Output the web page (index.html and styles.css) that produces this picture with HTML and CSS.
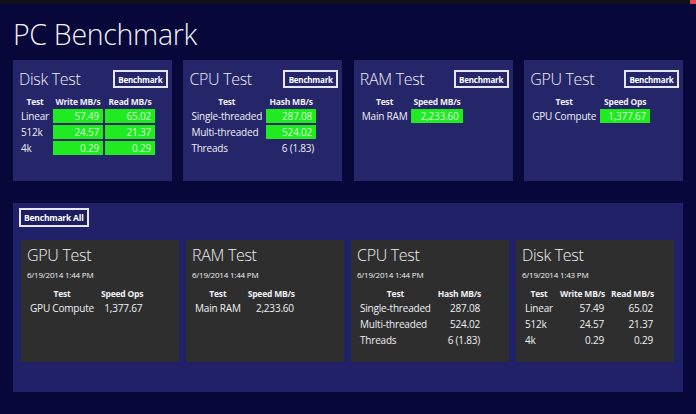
FILE: index.html
```html
<!DOCTYPE html>
<html lang="en">
<head>
    <meta charset="UTF-8">
    <meta name="viewport" content="width=device-width, initial-scale=1.0">
    <title>PC Benchmark</title>
    <link rel="stylesheet" href="styles.css">
</head>
<body>
    <div class="topbar"><span class="topbar-dot"></span></div>
    <h1 class="title">PC Benchmark</h1>

    <div class="tests">
        <section class="card">
            <div class="card-head">
                <h2>Disk Test</h2>
                <button class="btn">Benchmark</button>
            </div>
            <table class="results">
                <tr><th>Test</th><th>Write MB/s</th><th>Read MB/s</th></tr>
                <tr><td>Linear</td><td class="val">57.49</td><td class="val">65.02</td></tr>
                <tr><td>512k</td><td class="val">24.57</td><td class="val">21.37</td></tr>
                <tr><td>4k</td><td class="val">0.29</td><td class="val">0.29</td></tr>
            </table>
        </section>

        <section class="card">
            <div class="card-head">
                <h2>CPU Test</h2>
                <button class="btn">Benchmark</button>
            </div>
            <table class="results">
                <tr><th>Test</th><th>Hash MB/s</th></tr>
                <tr><td>Single-threaded</td><td class="val">287.08</td></tr>
                <tr><td>Multi-threaded</td><td class="val">524.02</td></tr>
                <tr><td>Threads</td><td class="num">6 (1.83)</td></tr>
            </table>
        </section>

        <section class="card">
            <div class="card-head">
                <h2>RAM Test</h2>
                <button class="btn">Benchmark</button>
            </div>
            <table class="results">
                <tr><th>Test</th><th>Speed MB/s</th></tr>
                <tr><td>Main RAM</td><td class="val">2,233.60</td></tr>
            </table>
        </section>

        <section class="card">
            <div class="card-head">
                <h2>GPU Test</h2>
                <button class="btn">Benchmark</button>
            </div>
            <table class="results">
                <tr><th>Test</th><th>Speed Ops</th></tr>
                <tr><td>GPU Compute</td><td class="val">1,377.67</td></tr>
            </table>
        </section>
    </div>

    <div class="history">
        <button class="btn btn-all">Benchmark All</button>
        <div class="history-cards">
            <section class="result-card">
                <h2>GPU Test</h2>
                <div class="date">6/19/2014 1:44 PM</div>
                <table class="results">
                    <tr><th>Test</th><th>Speed Ops</th></tr>
                    <tr><td>GPU Compute</td><td class="num">1,377.67</td></tr>
                </table>
            </section>

            <section class="result-card">
                <h2>RAM Test</h2>
                <div class="date">6/19/2014 1:44 PM</div>
                <table class="results">
                    <tr><th>Test</th><th>Speed MB/s</th></tr>
                    <tr><td>Main RAM</td><td class="num">2,233.60</td></tr>
                </table>
            </section>

            <section class="result-card">
                <h2>CPU Test</h2>
                <div class="date">6/19/2014 1:44 PM</div>
                <table class="results">
                    <tr><th>Test</th><th>Hash MB/s</th></tr>
                    <tr><td>Single-threaded</td><td class="num">287.08</td></tr>
                    <tr><td>Multi-threaded</td><td class="num">524.02</td></tr>
                    <tr><td>Threads</td><td class="num">6 (1.83)</td></tr>
                </table>
            </section>

            <section class="result-card">
                <h2>Disk Test</h2>
                <div class="date">6/19/2014 1:43 PM</div>
                <table class="results">
                    <tr><th>Test</th><th>Write MB/s</th><th>Read MB/s</th></tr>
                    <tr><td>Linear</td><td class="num">57.49</td><td class="num">65.02</td></tr>
                    <tr><td>512k</td><td class="num">24.57</td><td class="num">21.37</td></tr>
                    <tr><td>4k</td><td class="num">0.29</td><td class="num">0.29</td></tr>
                </table>
            </section>
        </div>
    </div>
</body>
</html>
```

FILE: styles.css
```css
body {
    font-family: "Open Sans", "Noto Sans", sans-serif;
    margin: 0;
    background-color: #07073a;
    color: #f0f0f4;
}
.topbar {
    height: 4px;
    background-color: #101018;
    display: flex;
    justify-content: flex-end;
}
.topbar-dot {
    width: 6px;
    background-color: #e84a4a;
}
.title {
    margin: 0;
    padding: 12px 0 0 13px;
    height: 44px;
    font-size: 28.5px;
    font-weight: 300;
    letter-spacing: -0.3px;
    line-height: 36px;
}
.tests {
    display: flex;
    gap: 11.5px;
    margin: 0 13px;
}
.card {
    width: 159px;
    height: 121px;
    box-sizing: border-box;
    padding: 10px 4px 0 6px;
    background-color: #25256a;
}
.card-head {
    display: flex;
    justify-content: space-between;
    align-items: center;
    height: 18px;
}
h2 {
    margin: 0;
    font-size: 16px;
    font-weight: 300;
    letter-spacing: -0.3px;
}
.btn {
    display: block;
    height: 18px;
    padding: 0 4px;
    border: 2px solid #e6e6f2;
    background: transparent;
    color: #ffffff;
    font-family: inherit;
    font-size: 8px;
    font-weight: bold;
    letter-spacing: -0.2px;
    cursor: pointer;
}
.card .btn {
    width: 55px;
    padding: 0;
}
.results {
    margin: 5px 0 0 -2px;
    border-spacing: 2px;
    font-size: 10px;
    letter-spacing: -0.2px;
}
.results th {
    font-size: 8.5px;
    font-weight: bold;
    text-align: center;
    padding: 0 2px;
    height: 12px;
}
.results td {
    height: 14px;
    line-height: 14px;
    padding: 0 2px;
    white-space: nowrap;
}
.results .val {
    min-width: 42px;
    padding: 0 4px;
    background-color: #20ea20;
    color: #d8f8d8;
    text-align: right;
}
.results .num {
    text-align: right;
}
.history {
    margin: 22px 13px 0;
    height: 189px;
    box-sizing: border-box;
    padding: 5px 9px 0 6px;
    background-color: #21216a;
}
.btn-all {
    height: 19px;
    padding: 0 3px;
    font-size: 8.5px;
    background-color: #1c1c5e;
}
.history-cards {
    display: flex;
    gap: 7px;
    margin: 13px 0 0 2px;
}
.result-card {
    width: 158px;
    height: 122px;
    box-sizing: border-box;
    padding: 5px 6px 0 6px;
    background-color: #2e2e2e;
}
.result-card h2 {
    line-height: 20px;
}
.date {
    margin-top: 4px;
    font-size: 8px;
    letter-spacing: -0.2px;
}
.result-card .results {
    margin-top: 5px;
}
.result-card .results td {
    padding: 0 3px;
}
```
